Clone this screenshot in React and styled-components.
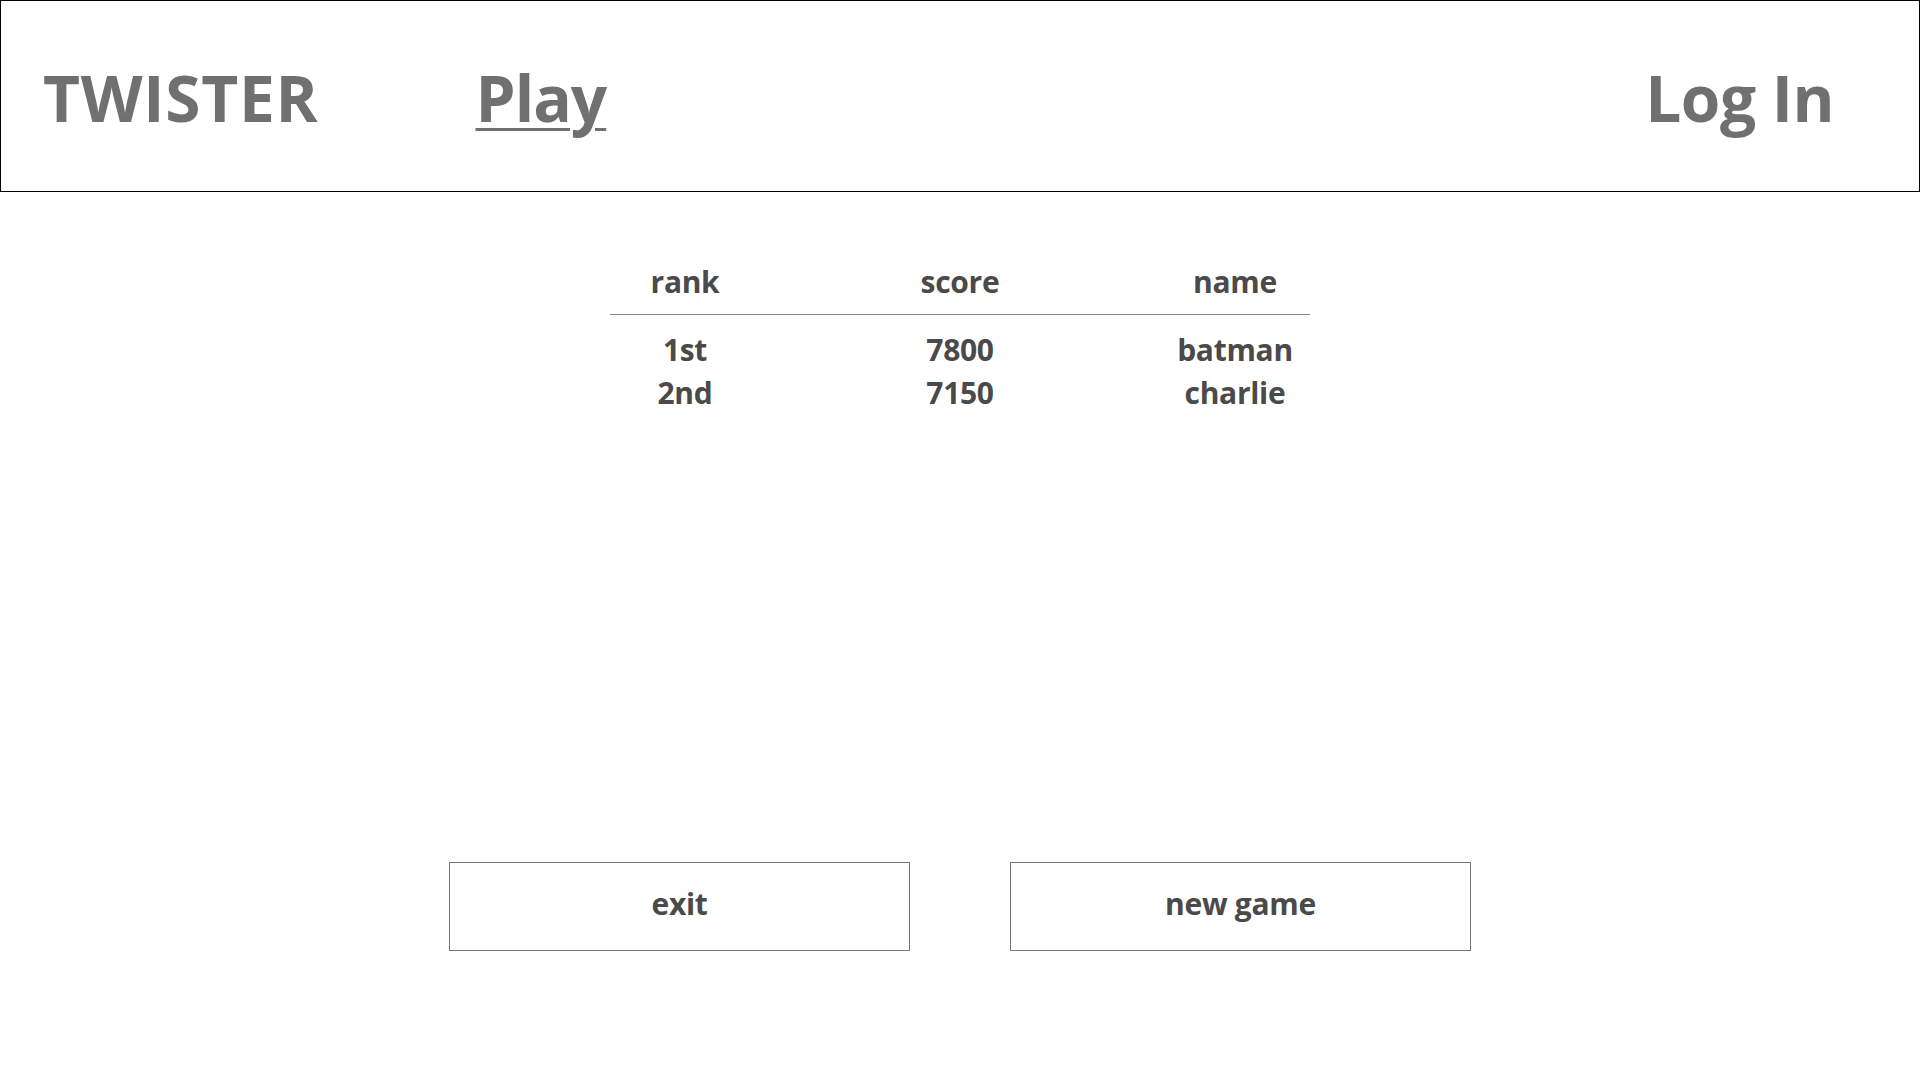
import React from 'react';
import styled, { createGlobalStyle } from 'styled-components';

const GlobalStyle = createGlobalStyle`
  html, body {
    margin: 0;
    padding: 0;
    background: #ffffff;
    font-family: "Open Sans", "Noto Sans", sans-serif;
  }
  * {
    box-sizing: border-box;
  }
`;

const Page = styled.div`
  width: 1920px;
  min-height: 1080px;
  display: flex;
  flex-direction: column;
`;

const Header = styled.header`
  height: 192px;
  border: 1px solid #000;
  display: flex;
  align-items: center;
  padding: 3px 85px 0 42px;
`;

const NavText = styled.a`
  font-size: 64px;
  font-weight: 700;
  color: #707070;
  text-decoration: ${(p) => (p.$active ? 'underline' : 'none')};
  text-decoration-thickness: 3px;
  text-underline-offset: 6px;
  margin-left: ${(p) => p.$offset || '0'};
  letter-spacing: ${(p) => p.$spacing || '0'};
`;

const Spacer = styled.div`
  flex: 1;
`;

const Main = styled.main`
  display: flex;
  flex-direction: column;
  align-items: center;
  padding-top: 70px;
`;

const Table = styled.div`
  width: 700px;
  display: flex;
  flex-direction: column;
`;

const Row = styled.div`
  display: grid;
  grid-template-columns: 150px 150px 150px;
  column-gap: 125px;
  height: ${(p) => p.$height || '43px'};
  align-items: start;
  border-bottom: ${(p) => (p.$head ? '1px solid #8a8a8a' : 'none')};
  margin-bottom: ${(p) => (p.$head ? '15px' : '0')};
`;

const Cell = styled.div`
  text-align: center;
  font-size: 30px;
  line-height: 40px;
  font-weight: 700;
  color: #4a4a4a;
  white-space: nowrap;
  letter-spacing: -0.3px;
`;

const Actions = styled.div`
  display: flex;
  gap: 100px;
  margin-top: 446px;
`;

const Button = styled.button`
  width: 461px;
  height: 89px;
  background: #fff;
  border: 1px solid #777;
  font-family: "Open Sans", "Noto Sans", sans-serif;
  font-size: 30px;
  font-weight: 700;
  color: #4a4a4a;
  letter-spacing: -0.3px;
  padding: 0 0 6px;
  cursor: pointer;
`;

const scores = [
  { rank: '1st', score: 7800, name: 'batman' },
  { rank: '2nd', score: 7150, name: 'charlie' },
];

export default function App() {
  return (
    <>
      <GlobalStyle />
      <Page>
        <Header>
          <NavText $spacing="0.7px">TWISTER</NavText>
          <NavText $active $offset="157px" $spacing="-1px">Play</NavText>
          <Spacer />
          <NavText $spacing="-0.5px">Log In</NavText>
        </Header>
        <Main>
          <Table>
            <Row $head $height="53px">
              <Cell>rank</Cell>
              <Cell>score</Cell>
              <Cell>name</Cell>
            </Row>
            {scores.map((s) => (
              <Row key={s.rank}>
                <Cell>{s.rank}</Cell>
                <Cell>{s.score}</Cell>
                <Cell>{s.name}</Cell>
              </Row>
            ))}
          </Table>
          <Actions>
            <Button>exit</Button>
            <Button>new game</Button>
          </Actions>
        </Main>
      </Page>
    </>
  );
}
